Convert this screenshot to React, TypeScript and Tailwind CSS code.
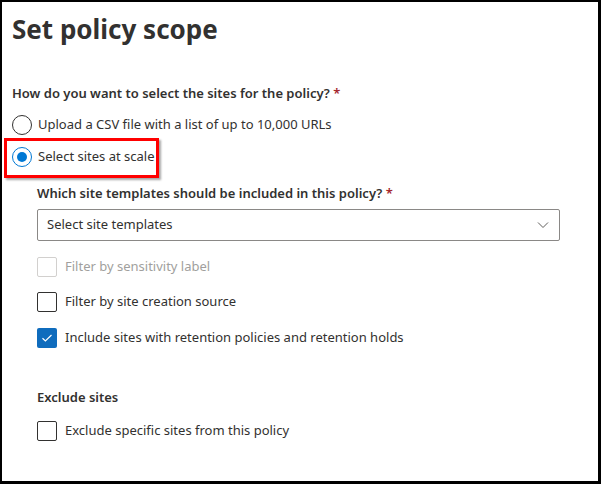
import React from "react";

function Radio({ checked }: { checked?: boolean }) {
  return checked ? (
    <span className="flex h-[20px] w-[20px] shrink-0 items-center justify-center rounded-full border border-[#0078d4] bg-white">
      <span className="h-[10px] w-[10px] rounded-full bg-[#0078d4]" />
    </span>
  ) : (
    <span className="h-[20px] w-[20px] shrink-0 rounded-full border border-[#323130] bg-white" />
  );
}

function Checkbox({ checked, disabled }: { checked?: boolean; disabled?: boolean }) {
  if (checked) {
    return (
      <span className="flex h-[20px] w-[20px] shrink-0 items-center justify-center rounded-[2px] bg-[#0f6cbd]">
        <svg width="12" height="10" viewBox="0 0 12 10" fill="none">
          <path d="M1.5 5.2 L4.4 8 L10.5 2" stroke="#ffffff" strokeWidth="1.2" />
        </svg>
      </span>
    );
  }
  return (
    <span
      className={
        disabled
          ? "h-[20px] w-[20px] shrink-0 rounded-[2px] border border-[#d2d0ce] bg-white"
          : "h-[20px] w-[20px] shrink-0 rounded-[2px] border border-[#323130] bg-white"
      }
    />
  );
}

export default function App() {
  return (
    <div
      className="relative box-border h-[484px] w-[601px] overflow-hidden border-t-2 border-l-2 border-r-[3px] border-b-[3px] border-black bg-white text-[#323130]"
      style={{ fontFamily: '"Noto Sans", "Open Sans", Arial, sans-serif' }}
    >
      <div className="flex flex-col pl-[10px]">
        <h1 className="mt-[9px] h-[36px] text-[26px] font-bold leading-[36px] text-[#323130]">
          Set policy scope
        </h1>
        <div className="mt-[36px] h-[20px] text-[13px] font-semibold leading-[20px]">
          How do you want to select the sites for the policy? <span className="text-[#a4262c]">*</span>
        </div>
        <div className="mt-[10px] flex h-[24px] items-center gap-[6px] text-[13px]">
          <Radio />
          <span>Upload a CSV file with a list of up to 10,000 URLs</span>
        </div>
        <div className="mt-[8px] flex h-[24px] items-center gap-[6px] text-[13px]">
          <Radio checked />
          <span>Select sites at scale</span>
        </div>
        <div className="ml-[25px] flex flex-col">
          <div className="mt-[14px] h-[20px] text-[13px] font-semibold leading-[20px]">
            Which site templates should be included in this policy? <span className="text-[#a4262c]">*</span>
          </div>
          <div className="mt-[6px] flex h-[32px] w-[523px] items-center justify-between rounded-[2px] border border-[#8a8886] pl-[9px] pr-[10px] text-[13px]">
            <span>Select site templates</span>
            <svg width="12" height="8" viewBox="0 0 12 8" fill="none">
              <path d="M1 1.5 L6 6.5 L11 1.5" stroke="#605e5c" strokeWidth="1" />
            </svg>
          </div>
          <div className="mt-[16px] flex h-[20px] items-center gap-[8px] text-[13px] text-[#a19f9d]">
            <Checkbox disabled />
            <span>Filter by sensitivity label</span>
          </div>
          <div className="mt-[15px] flex h-[20px] items-center gap-[8px] text-[13px]">
            <Checkbox />
            <span>Filter by site creation source</span>
          </div>
          <div className="mt-[16px] flex h-[20px] items-center gap-[8px] text-[13px]">
            <Checkbox checked />
            <span>Include sites with retention policies and retention holds</span>
          </div>
          <div className="mt-[39px] h-[20px] text-[13px] font-semibold leading-[20px]">Exclude sites</div>
          <div className="mt-[14px] flex h-[20px] items-center gap-[8px] text-[13px]">
            <Checkbox />
            <span>Exclude specific sites from this policy</span>
          </div>
        </div>
      </div>
      <div className="absolute left-[2px] top-[136px] h-[40px] w-[155px] border-[3px] border-[#ff0000] shadow-[2px_2px_2px_rgba(0,0,0,0.35)]" />
    </div>
  );
}
